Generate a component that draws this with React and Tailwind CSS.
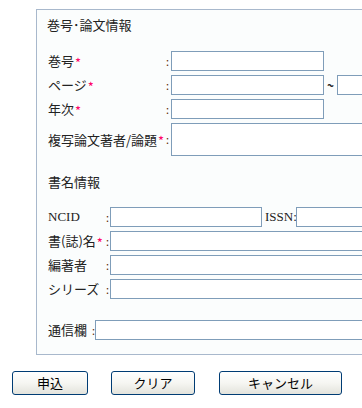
import React from 'react'

const jp = { fontFamily: '"Noto Sans CJK JP", "DejaVu Sans", sans-serif' }
const serif = { fontFamily: '"Liberation Serif", "Noto Sans CJK JP", serif' }

const Req = () => <span className="text-[#ff0066] text-[13px] leading-none ml-[1px] relative top-[1px]">*</span>
const Colon = ({ className = '' }) => <span className={'text-[#5a2a00] text-[11px] leading-none ' + className}>:</span>

const Input = ({ className = '' }) => (
  <input type="text" className={'border border-[#7f9db9] bg-white outline-none ' + className} />
)

const Btn = ({ children, className = '' }) => (
  <button
    className={
      'h-[24px] rounded-[3px] border border-[#003c74] bg-gradient-to-b from-white via-[#f6f6f2] to-[#e3e3dc] text-[13px] text-black flex items-center justify-center ' +
      className
    }
  >
    {children}
  </button>
)

export default function App() {
  return (
    <div className="w-[362px] h-[408px] overflow-hidden bg-white text-[#222] text-[13px]" style={jp}>
      <div className="pt-[9px] pl-[36px]">
        <div className="w-[420px] h-[346px] border border-[#a8b8cc] bg-[#fbfdfd] pl-[11px] flex flex-col">
          <div className="h-[18px] mt-[6px] -ml-[1px] flex items-center">巻号･論文情報</div>

          <div className="mt-[17px] h-[20px] flex items-center">
            <div className="w-[118px] flex items-center">巻号<Req /></div>
            <Colon className="w-[5px]" />
            <Input className="w-[153px] h-[20px]" />
          </div>
          <div className="mt-[4px] h-[20px] flex items-center">
            <div className="w-[118px] flex items-center">ページ<Req /></div>
            <Colon className="w-[5px]" />
            <Input className="w-[153px] h-[20px]" />
            <span className="w-[13px] text-center text-[12px] font-bold">~</span>
            <Input className="w-[80px] h-[20px]" />
          </div>
          <div className="mt-[4px] h-[20px] flex items-center">
            <div className="w-[118px] flex items-center">年次<Req /></div>
            <Colon className="w-[5px]" />
            <Input className="w-[153px] h-[20px]" />
          </div>
          <div className="mt-[4px] h-[33px] flex items-center">
            <div className="w-[118px] flex items-center whitespace-nowrap">複写論文著者/論題<Req /></div>
            <Colon className="w-[5px]" />
            <textarea className="w-[240px] h-[33px] border border-[#7f9db9] bg-white outline-none resize-none" />
          </div>

          <div className="h-[18px] mt-[17px] flex items-center">書名情報</div>

          <div className="mt-[16px] h-[20px] flex items-center">
            <div className="w-[58px] text-[13px]" style={serif}>NCID</div>
            <Colon className="w-[4px]" />
            <Input className="w-[152px] h-[20px]" />
            <span className="w-[34px] text-[13px] pl-[3px]" style={serif}>ISSN:</span>
            <Input className="w-[100px] h-[20px]" />
          </div>
          <div className="mt-[4px] h-[20px] flex items-center">
            <div className="w-[58px] flex items-center whitespace-nowrap">書(誌)名<Req /></div>
            <Colon className="w-[4px]" />
            <Input className="w-[260px] h-[20px]" />
          </div>
          <div className="mt-[4px] h-[20px] flex items-center">
            <div className="w-[58px]">編著者</div>
            <Colon className="w-[4px]" />
            <Input className="w-[260px] h-[20px]" />
          </div>
          <div className="mt-[4px] h-[20px] flex items-center">
            <div className="w-[58px]">シリーズ</div>
            <Colon className="w-[4px]" />
            <Input className="w-[260px] h-[20px]" />
          </div>

          <div className="mt-[21px] h-[20px] flex items-center">
            <div className="w-[44px] whitespace-nowrap">通信欄</div>
            <Colon className="w-[3px]" />
            <Input className="w-[280px] h-[20px]" />
          </div>
        </div>
      </div>

      <div className="mt-[16px] pl-[12px] flex">
        <Btn className="w-[76px]">申込</Btn>
        <Btn className="w-[84px] ml-[23px]">クリア</Btn>
        <Btn className="w-[123px] ml-[24px]">キャンセル</Btn>
      </div>
    </div>
  )
}
